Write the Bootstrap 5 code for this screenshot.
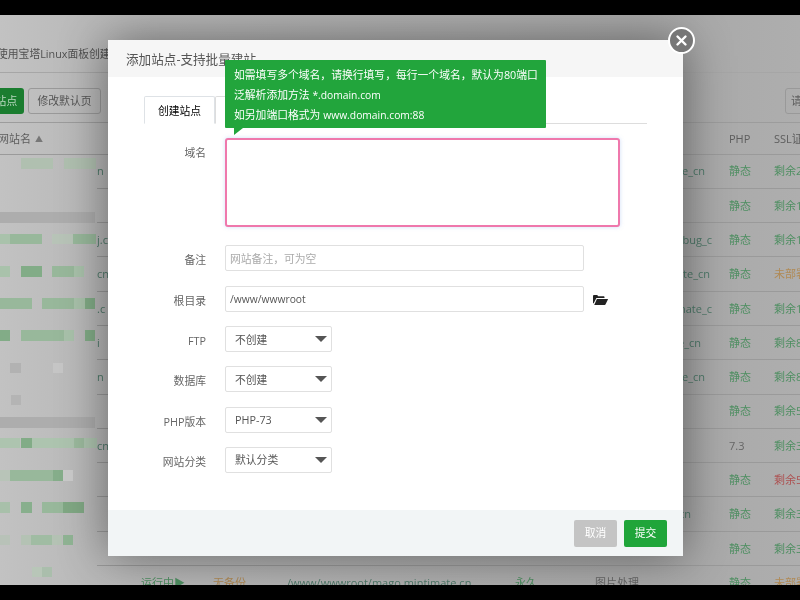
<!doctype html>
<html lang="zh">
<head>
<meta charset="utf-8">
<title>添加站点</title>
<link href="https://cdn.jsdelivr.net/npm/bootstrap@5.3.0/dist/css/bootstrap.min.css" rel="stylesheet">
<style>
html,body{margin:0;background:#000;overflow:hidden}
body{font-family:"Open Sans","Noto Sans CJK SC",sans-serif;font-size:10.8px;color:#555}
.shell{width:800px;height:600px;padding:15px 0;background:#000;position:relative;filter:blur(.6px)}
.page{height:570px;overflow:hidden;color:#5f5f5f;background:linear-gradient(90deg,#c2c2c2 0,#b9b9b9 90px,#a9a9a9 690px,#aeaeae 100%)}
.crumb{height:58px;padding-top:30px;line-height:18px;border-bottom:1px solid #a6a6a6;white-space:nowrap;font-size:10.8px;color:#505050;margin-left:-3px;width:803px}
.tools{height:50px;padding-top:15px;border-bottom:1px solid #9c9c9c;position:relative;display:flex;gap:4px}
.bg-green{width:60px;height:26px;margin-left:-36px;padding:0 10px;background:#1a7d2f;color:#b9d8bf;border:0;border-radius:3px;font-size:10.8px;text-align:right;white-space:nowrap}
.bg-light-btn{width:73px;height:26px;padding:0;background:transparent;color:#555;border:1px solid #999;border-radius:3px;font-size:10.8px}
.bg-search{margin-left:auto;width:40px;height:26px;margin-right:-25px;border:1px solid #999;border-radius:3px;padding:5px;line-height:14px}
.sitetable{table-layout:fixed;width:800px;border-collapse:collapse}
.sitetable th,.sitetable td{padding:1px 0 0 0;white-space:nowrap;overflow:hidden;font-weight:400;border-bottom:1px solid #9a9a9a;height:34.3px;vertical-align:middle;font-size:11px}
.sitetable th{height:31px;color:#5d5d5d;font-size:11px}
.sitetable td.blank{border-bottom:0}
.sitetable td.edge{border-bottom:0}
.namehead{text-indent:-2px}
.arrow{font-size:8px;color:#777;margin-left:4px;vertical-align:1px}
.ok{color:#4f8f62}.warn{color:#b08a55}.bad{color:#ad5252}.tail{color:#4f7a6a}.mut{color:#666}
.a1{padding-right:24px!important}.a2{padding-right:17px!important}.a3{padding-right:19px!important}.a4{padding-right:28px!important}.a5{padding-right:38px!important}
.mosaic{position:absolute;left:0;top:150px;width:97px;height:440px}
.dlg{position:absolute;left:108px;top:40px;width:575px;height:516px;background:#fff;border:0;border-radius:0;box-shadow:0 0 45px rgba(0,0,0,.45);display:flex;flex-direction:column}
.dlg .modal-header{height:37px;padding:3px 18px 0;background:#f6f6f6;border:0;border-radius:0;font-size:12.6px;color:#555}
.dlg .modal-body{padding:19px 36px 0;flex:1}
.dlg .modal-footer{height:46px;padding:0 16px;background:#f2f5f6;border:0;border-radius:0;gap:7px;flex-wrap:nowrap;justify-content:flex-end}
.dlg .modal-footer>*{margin:0}
.tabline{border-bottom:1px solid #ddd;margin-bottom:14px;height:28px}
.tabline .nav-link{width:71px;height:28px;padding:0;line-height:28px;text-align:center;color:#666;font-size:10.8px;border:1px solid #ddd;border-radius:2px 2px 0 0;background:#fff;border-bottom-color:#fff}
.fld{display:flex;margin-bottom:14.2px}
.fld label{width:62px;margin-right:19px;text-align:right;padding-top:8px;line-height:14px;color:#666;flex:none}
.fld .form-control,.fld .form-select{height:26px;min-height:0;padding:0 4px;font-size:10.8px;color:#555;border:1.5px solid #e0e0e0;border-radius:2px;box-shadow:none}
.fld .form-control::placeholder{color:#aaa}
.fld textarea.form-control{width:395px;height:89px;border:2px solid #ef78ac;border-radius:3px;box-shadow:0 0 4px rgba(120,160,235,.35);resize:none}
.w-in{width:359px}
.fld .path-in{font-size:10.3px}
.fld .form-select{width:107px;padding:1px 0 0 9px;background-position:right 3px center;background-size:14px 8px;background-image:url("data:image/svg+xml,%3Csvg xmlns='http://www.w3.org/2000/svg' viewBox='0 0 14 8'%3E%3Cpath fill='%23555' d='M1 1h12L7 7z'/%3E%3C/svg%3E")}
.first{margin-bottom:18px}
.second{margin-bottom:15px}
.folder{margin:9px 0 0 9px;flex:none}
.tip{position:absolute;left:117px;top:20px;width:321px;height:68px;padding:5px 9px 3px;background:#22a53c;color:#fff;line-height:20px;font-size:10.8px;white-space:nowrap;border-radius:1px}
.tip::after{content:"";position:absolute;left:9px;top:100%;border-left:9px solid #22a53c;border-bottom:7px solid transparent}
.lat{font-size:10.3px}
.closer{position:absolute;left:560px;top:-13px;width:27px;height:27px;padding:0;border:2px solid #fff;border-radius:50%;background:#777;display:flex;align-items:center;justify-content:center}
.b-cancel,.b-submit{width:43px;height:27px;padding:0;border:0;border-radius:2px;font-size:10.8px;color:#fff}
.b-cancel{background:#c4c4c4}.b-submit{background:#20a53a}
</style>
</head>
<body>
<div class="shell">
  <div class="page">
    <div class="crumb">使用宝塔Linux面板创建站点</div>
    <div class="tools">
      <button class="bg-green">添加站点</button>
      <button class="bg-light-btn">修改默认页</button>
      <div class="bg-search">请</div>
    </div>
    <table class="sitetable">
      <colgroup><col style="width:97px"><col style="width:44px"><col style="width:72px"><col style="width:74px"><col style="width:228px"><col style="width:80px"><col style="width:134px"><col style="width:45px"><col style="width:26px"></colgroup>
      <thead><tr><th class="namehead" colspan="2">网站名<span class="arrow">▲</span></th><th>状态</th><th>备份</th><th>根目录</th><th>保存时长</th><th>备注</th><th>PHP</th><th>SSL证书</th></tr></thead>
      <tbody>
        <tr><td class="blank"></td><td class="tail">n</td><td></td><td></td><td></td><td></td><td class="text-end tail a1">e_cn</td><td class="ok">静态</td><td class="ok">剩余21</td></tr>
        <tr><td class="blank"></td><td></td><td></td><td></td><td></td><td></td><td></td><td class="ok">静态</td><td class="ok">剩余15</td></tr>
        <tr><td class="blank"></td><td class="tail">j.c</td><td></td><td></td><td></td><td></td><td class="text-end tail a2">bug_c</td><td class="ok">静态</td><td class="ok">剩余12</td></tr>
        <tr><td class="blank"></td><td class="tail">cn</td><td></td><td></td><td></td><td></td><td class="text-end tail a3">ate_cn</td><td class="ok">静态</td><td class="warn">未部署</td></tr>
        <tr><td class="blank"></td><td class="tail">.c</td><td></td><td></td><td></td><td></td><td class="text-end tail a2">hate_c</td><td class="ok">静态</td><td class="ok">剩余10</td></tr>
        <tr><td class="blank"></td><td class="tail">i</td><td></td><td></td><td></td><td></td><td class="text-end tail a4">e_cn</td><td class="ok">静态</td><td class="ok">剩余85</td></tr>
        <tr><td class="blank"></td><td class="tail">n</td><td></td><td></td><td></td><td></td><td class="text-end tail a1">e_cn</td><td class="ok">静态</td><td class="ok">剩余85</td></tr>
        <tr><td class="blank"></td><td></td><td></td><td></td><td></td><td></td><td></td><td class="ok">静态</td><td class="ok">剩余51</td></tr>
        <tr><td class="blank"></td><td class="tail">cn</td><td></td><td></td><td></td><td></td><td></td><td class="mut">7.3</td><td class="ok">剩余30</td></tr>
        <tr><td class="blank"></td><td></td><td></td><td></td><td></td><td></td><td></td><td class="ok">静态</td><td class="bad">剩余5</td></tr>
        <tr><td class="blank"></td><td></td><td></td><td></td><td></td><td></td><td class="text-end tail a5">cn</td><td class="ok">静态</td><td class="ok">剩余34</td></tr>
        <tr><td class="blank"></td><td></td><td></td><td></td><td></td><td></td><td></td><td class="ok">静态</td><td class="ok">剩余34</td></tr>
        <tr><td class="edge"></td><td class="edge"></td><td class="edge ok">运行中▶</td><td class="edge warn">无备份</td><td class="edge tail">/www/wwwroot/mago.mintimate.cn</td><td class="edge ok">永久</td><td class="edge mut">图片处理</td><td class="edge ok">静态</td><td class="edge warn">未部署</td></tr>
      </tbody>
    </table>
  </div>

  <svg class="mosaic" viewBox="0 0 97 440" aria-hidden="true">
    <g fill="#b0c0b0"><rect x="21" y="8" width="32" height="11"/><rect x="64" y="8" width="32" height="11"/></g>
    <rect x="0" y="62" width="95" height="11" fill="#adadad"/>
    <g fill="#a9c2ab"><rect x="0" y="84" width="10" height="10"/><rect x="52" y="84" width="21" height="10" fill="#b8c4b8"/>
      <rect x="0" y="116" width="10" height="11"/><rect x="74" y="116" width="10" height="11"/>
      <rect x="74" y="148" width="11" height="11"/><rect x="64" y="180" width="10" height="11"/></g>
    <g fill="#98b89b"><rect x="10" y="84" width="32" height="10"/><rect x="73" y="84" width="23" height="10"/>
      <rect x="52" y="116" width="22" height="11"/><rect x="0" y="148" width="32" height="11"/>
      <rect x="42" y="148" width="32" height="11"/><rect x="21" y="180" width="43" height="11"/></g>
    <g fill="#82ac87"><rect x="21" y="116" width="21" height="11"/><rect x="85" y="148" width="10" height="11"/>
      <rect x="0" y="180" width="10" height="11"/><rect x="85" y="180" width="10" height="11"/></g>
    <rect x="10" y="213" width="11" height="10" fill="#b2b2b2"/><rect x="53" y="213" width="10" height="10" fill="#c6c6c6"/>
    <rect x="11" y="245" width="10" height="10" fill="#b4b4b4"/>
    <rect x="0" y="267" width="95" height="11" fill="#adadad"/>
    <g fill="#adc4af"><rect x="0" y="288" width="20" height="10"/><rect x="32" y="288" width="42" height="10"/><rect x="84" y="288" width="13" height="10"/></g>
    <rect x="21" y="288" width="11" height="10" fill="#82ac87"/><rect x="74" y="288" width="10" height="10" fill="#9cba9e"/>
    <rect x="0" y="320" width="10" height="11" fill="#b8c4b8"/><rect x="10" y="320" width="43" height="11" fill="#98b89b"/><rect x="53" y="320" width="10" height="11" fill="#86ae8b"/><rect x="63" y="320" width="10" height="11" fill="#cbcbcb"/>
    <rect x="0" y="352" width="10" height="11" fill="#a8c0aa"/><rect x="21" y="352" width="11" height="11" fill="#88af8d"/><rect x="42" y="352" width="21" height="11" fill="#98b89b"/><rect x="63" y="352" width="21" height="11" fill="#80a884"/>
    <rect x="0" y="385" width="10" height="10" fill="#b8c2b8"/><rect x="21" y="385" width="10" height="10" fill="#b4c2b4"/><rect x="31" y="385" width="21" height="10" fill="#a0bca3"/><rect x="52" y="385" width="10" height="10" fill="#b4c2b4"/><rect x="63" y="385" width="10" height="10" fill="#90b494"/>
    <rect x="32" y="417" width="10" height="10" fill="#b8c6b8"/><rect x="42" y="417" width="10" height="10" fill="#aabeac"/>
  </svg>

  <div class="dlg modal-content">
    <div class="modal-header">添加站点-支持批量建站</div>
    <div class="modal-body">
      <ul class="nav nav-tabs tabline">
        <li class="nav-item"><a class="nav-link active" href="#">创建站点</a></li>
        <li class="nav-item"><a class="nav-link" href="#">批量创建</a></li>
      </ul>
      <form>
        <div class="fld first"><label>域名</label><textarea class="form-control"></textarea></div>
        <div class="fld second"><label>备注</label><input class="form-control w-in" placeholder="网站备注，可为空"></div>
        <div class="fld"><label>根目录</label><input class="form-control w-in path-in" value="/www/wwwroot">
          <svg class="folder" width="15" height="10" viewBox="0 0 15 10" aria-hidden="true"><path fill="#222" d="M0 1.2C0 .5.5 0 1.2 0h3l1 1.2h5.3c.6 0 1 .4 1 1V3H3.4L.6 8.6 0 8zM3.9 4H14.6c.3 0 .5.3.3.6l-2.3 4.7c-.2.4-.5.7-1 .7H1.2z"/></svg>
        </div>
        <div class="fld"><label>FTP</label><select class="form-select"><option>不创建</option></select></div>
        <div class="fld"><label>数据库</label><select class="form-select"><option>不创建</option></select></div>
        <div class="fld"><label>PHP版本</label><select class="form-select"><option>PHP-73</option></select></div>
        <div class="fld"><label>网站分类</label><select class="form-select"><option>默认分类</option></select></div>
      </form>
    </div>
    <div class="modal-footer">
      <button class="b-cancel" type="button">取消</button>
      <button class="b-submit" type="button">提交</button>
    </div>
    <div class="tip">如需填写多个域名，请换行填写，每行一个域名，默认为80端口<br>泛解析添加方法 <span class="lat">*.domain.com</span><br>如另加端口格式为 <span class="lat">www.domain.com:88</span></div>
    <button class="closer" type="button" aria-label="关闭"><svg width="13" height="13" viewBox="0 0 13 13"><path d="M2.5 2.5l8 8M10.5 2.5l-8 8" stroke="#fff" stroke-width="2.4" stroke-linecap="round"/></svg></button>
  </div>
</div>
<script src="https://cdn.jsdelivr.net/npm/bootstrap@5.3.0/dist/js/bootstrap.bundle.min.js"></script>
</body>
</html>
